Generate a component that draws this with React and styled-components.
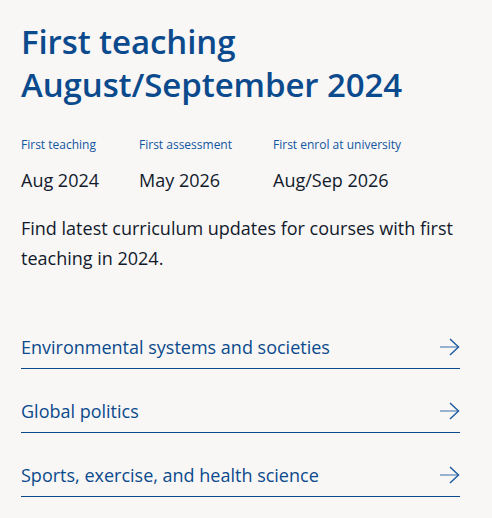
import styled, { createGlobalStyle } from "styled-components";

const GlobalStyle = createGlobalStyle`
  body {
    margin: 0;
    background: #f8f7f6;
    font-family: "Open Sans", "Noto Sans", sans-serif;
  }
`;

const Page = styled.div`
  width: 439px;
  padding: 20px 32px 20px 21px;
`;

const Title = styled.h1`
  margin: 0;
  font-size: 33px;
  line-height: 43px;
  font-weight: 600;
  letter-spacing: -0.1px;
  color: #0b4a8c;
`;

const Dates = styled.div`
  display: grid;
  grid-template-columns: 118px 134px 1fr;
  margin-top: 30px;
`;

const Label = styled.div`
  font-size: 12px;
  color: #1255a0;
  line-height: 18px;
`;

const Value = styled.div`
  margin-top: 14px;
  font-size: 18px;
  color: #121a2b;
  line-height: 24px;
`;

const Intro = styled.p`
  margin: 21px 0 0;
  font-size: 18px;
  line-height: 30px;
  color: #121a2b;
`;

const Links = styled.div`
  margin-top: 52px;
  display: flex;
  flex-direction: column;
  gap: 20px;
`;

const Row = styled.a`
  display: flex;
  align-items: center;
  justify-content: space-between;
  height: 43px;
  border-bottom: 1px solid #0b4a8c;
  color: #0b4a8c;
  font-size: 18px;
  text-decoration: none;
  cursor: pointer;
`;

const Arrow = () => (
  <svg width="20" height="18" viewBox="0 0 20 18" fill="none">
    <path d="M0 9H18.5" stroke="#7fa1c6" strokeWidth="1.6" />
    <path d="M10 1L18.5 9L10 17" stroke="#1a5a9e" strokeWidth="1.4" />
  </svg>
);

const dates = [
  { label: "First teaching", value: "Aug 2024" },
  { label: "First assessment", value: "May 2026" },
  { label: "First enrol at university", value: "Aug/Sep 2026" },
];

const courses = [
  "Environmental systems and societies",
  "Global politics",
  "Sports, exercise, and health science",
];

export default function App() {
  return (
    <>
      <GlobalStyle />
      <Page>
        <Title>
          First teaching
          <br />
          August/September 2024
        </Title>
        <Dates>
          {dates.map((d) => (
            <div key={d.label}>
              <Label>{d.label}</Label>
              <Value>{d.value}</Value>
            </div>
          ))}
        </Dates>
        <Intro>
          Find latest curriculum updates for courses with first teaching in 2024.
        </Intro>
        <Links>
          {courses.map((c) => (
            <Row key={c}>
              <span>{c}</span>
              <Arrow />
            </Row>
          ))}
        </Links>
      </Page>
    </>
  );
}
